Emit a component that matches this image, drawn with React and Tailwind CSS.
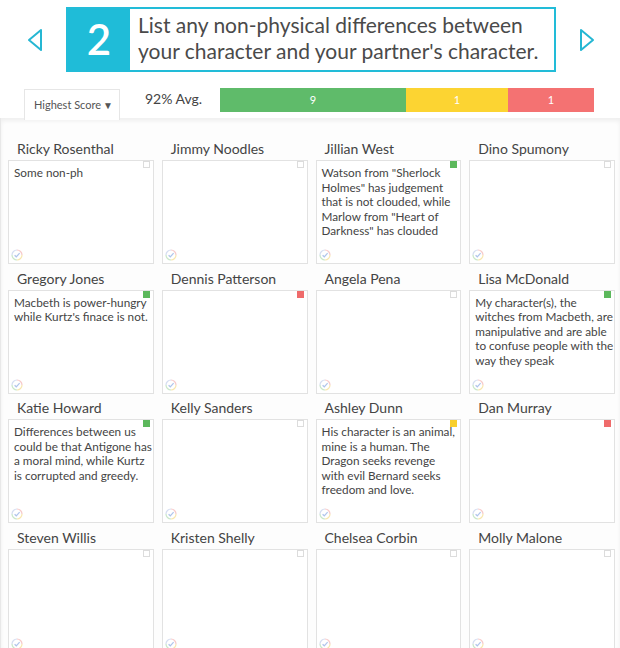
const students = [
  { name: "Ricky Rosenthal", lines: ["Some non-ph"], mark: null },
  { name: "Jimmy Noodles", lines: [], mark: null },
  {
    name: "Jillian West",
    lines: ['Watson from "Sherlock', 'Holmes" has judgement', "that is not clouded, while", 'Marlow from "Heart of', 'Darkness" has clouded'],
    mark: "green",
  },
  { name: "Dino Spumony", lines: [], mark: null },
  { name: "Gregory Jones", lines: ["Macbeth is power-hungry", "while Kurtz's finace is not."], mark: "green" },
  { name: "Dennis Patterson", lines: [], mark: "red" },
  { name: "Angela Pena", lines: [], mark: null },
  {
    name: "Lisa McDonald",
    lines: ["My character(s), the", "witches from Macbeth, are", "manipulative and are able", "to confuse people with the", "way they speak"],
    mark: "green",
  },
  {
    name: "Katie Howard",
    lines: ["Differences between us", "could be that Antigone has", "a moral mind, while Kurtz", "is corrupted and greedy."],
    mark: "green",
  },
  { name: "Kelly Sanders", lines: [], mark: null },
  {
    name: "Ashley Dunn",
    lines: ["His character is an animal,", "mine is a human. The", "Dragon seeks revenge", "with evil Bernard seeks", "freedom and love."],
    mark: "yellow",
  },
  { name: "Dan Murray", lines: [], mark: "red" },
  { name: "Steven Willis", lines: [], mark: null },
  { name: "Kristen Shelly", lines: [], mark: null },
  { name: "Chelsea Corbin", lines: [], mark: null },
  { name: "Molly Malone", lines: [], mark: null },
];

const markClass = {
  green: "bg-[#5cb85c] border-[#5cb85c]",
  yellow: "bg-[#f8cf2c] border-[#f8cf2c]",
  red: "bg-[#ef6b6b] border-[#ef6b6b]",
};

const CheckIcon = () => (
  <svg width="12" height="12" viewBox="0 0 12 12" className="opacity-60">
    <path d="M6 1 A5 5 0 0 1 11 6" fill="none" stroke="#f2a7a7" strokeWidth="1.2" />
    <path d="M11 6 A5 5 0 0 1 6 11" fill="none" stroke="#f4d77a" strokeWidth="1.2" />
    <path d="M6 11 A5 5 0 0 1 1 6" fill="none" stroke="#a6d8a6" strokeWidth="1.2" />
    <path d="M1 6 A5 5 0 0 1 6 1" fill="none" stroke="#b9c7e8" strokeWidth="1.2" />
    <path d="M3.6 6.2 L5.3 7.8 L8.6 4.2" fill="none" stroke="#7a9ee0" strokeWidth="1.2" />
  </svg>
);

const Card = ({ name, lines, mark }) => (
  <div className="flex flex-col">
    <div className="h-[22px] pl-[9px] text-[14px] leading-[22px] text-[#444]">{name}</div>
    <div className="relative h-[104px] border border-[#e2e2e2] bg-white pl-[5px] pt-[5px]">
      <div
        className={`absolute right-[3px] top-0 h-[7px] w-[7px] border ${
          mark ? markClass[mark] : "border-[#dcdcdc] bg-white"
        }`}
      ></div>
      <div className="text-[11.75px] leading-[14.5px] text-[#444]">
        {lines.map((l, i) => (
          <div key={i} className="whitespace-nowrap">
            {l}
          </div>
        ))}
      </div>
      <div className="absolute bottom-[2px] left-[2px]">
        <CheckIcon />
      </div>
    </div>
  </div>
);

const Arrow = ({ dir }) => (
  <svg width="18" height="24" viewBox="0 0 18 24">
    <path
      d={dir === "left" ? "M15 2 L3 12 L15 22 Z" : "M3 2 L15 12 L3 22 Z"}
      fill="none"
      stroke="#25b7d3"
      strokeWidth="2"
      strokeLinejoin="round"
    />
  </svg>
);

export default function App() {
  return (
    <div className="h-[648px] w-[620px] overflow-hidden bg-white font-['Lato','Open_Sans',sans-serif] text-[#444]">
      <div className="relative h-[118px] pt-[7px]">
        <div className="flex items-center">
          <div className="flex w-[66px] shrink-0 justify-center pl-[3px]">
            <Arrow dir="left" />
          </div>
          <div className="flex h-[65px] w-[490px] shrink-0 border-2 border-[#22bcd8] bg-white">
            <div className="flex w-[62px] shrink-0 items-center justify-center bg-[#1fbcd8] text-[42px] font-semibold text-white">
              2
            </div>
            <div className="whitespace-nowrap pl-[8px] pt-[3px] text-[21px] leading-[26px] text-[#4a4a4a]">
              List any non-physical differences between
              <br />
              your character and your partner's character.
            </div>
          </div>
          <div className="flex flex-1 justify-center pr-[3px]">
            <Arrow dir="right" />
          </div>
        </div>
        <div className="mt-[16px] flex items-start">
          <div className="ml-[24px] mt-[1px] flex h-[31px] w-[96px] items-center justify-between border border-b-0 border-[#e6e6e6] bg-white pl-[9px] pr-[6px] text-[11px] text-[#555]">
            <span>Highest Score</span>
            <span className="text-[10px]">▼</span>
          </div>
          <div className="ml-[25px] w-[75px] pt-[1px] text-[14px] leading-[20px] text-[#444]">92% Avg.</div>
          <div className="flex h-[24px] w-[374px] text-[11px] leading-[24px] text-white">
            <div className="w-[186px] bg-[#5fbb6a] text-center">9</div>
            <div className="w-[102px] bg-[#fcd432] text-center">1</div>
            <div className="flex-1 bg-[#f47272] text-center">1</div>
          </div>
        </div>
      </div>
      <div className="h-[530px] border-l border-[#e8e8e8] bg-[#fdfdfd] shadow-[inset_0_3px_4px_rgba(0,0,0,0.06)]">
        <div className="grid grid-cols-4 gap-x-[8px] gap-y-[3.5px] pl-[7px] pr-[5px] pt-[20px]">
          {students.map((s) => (
            <Card key={s.name} {...s} />
          ))}
        </div>
      </div>
    </div>
  );
}
